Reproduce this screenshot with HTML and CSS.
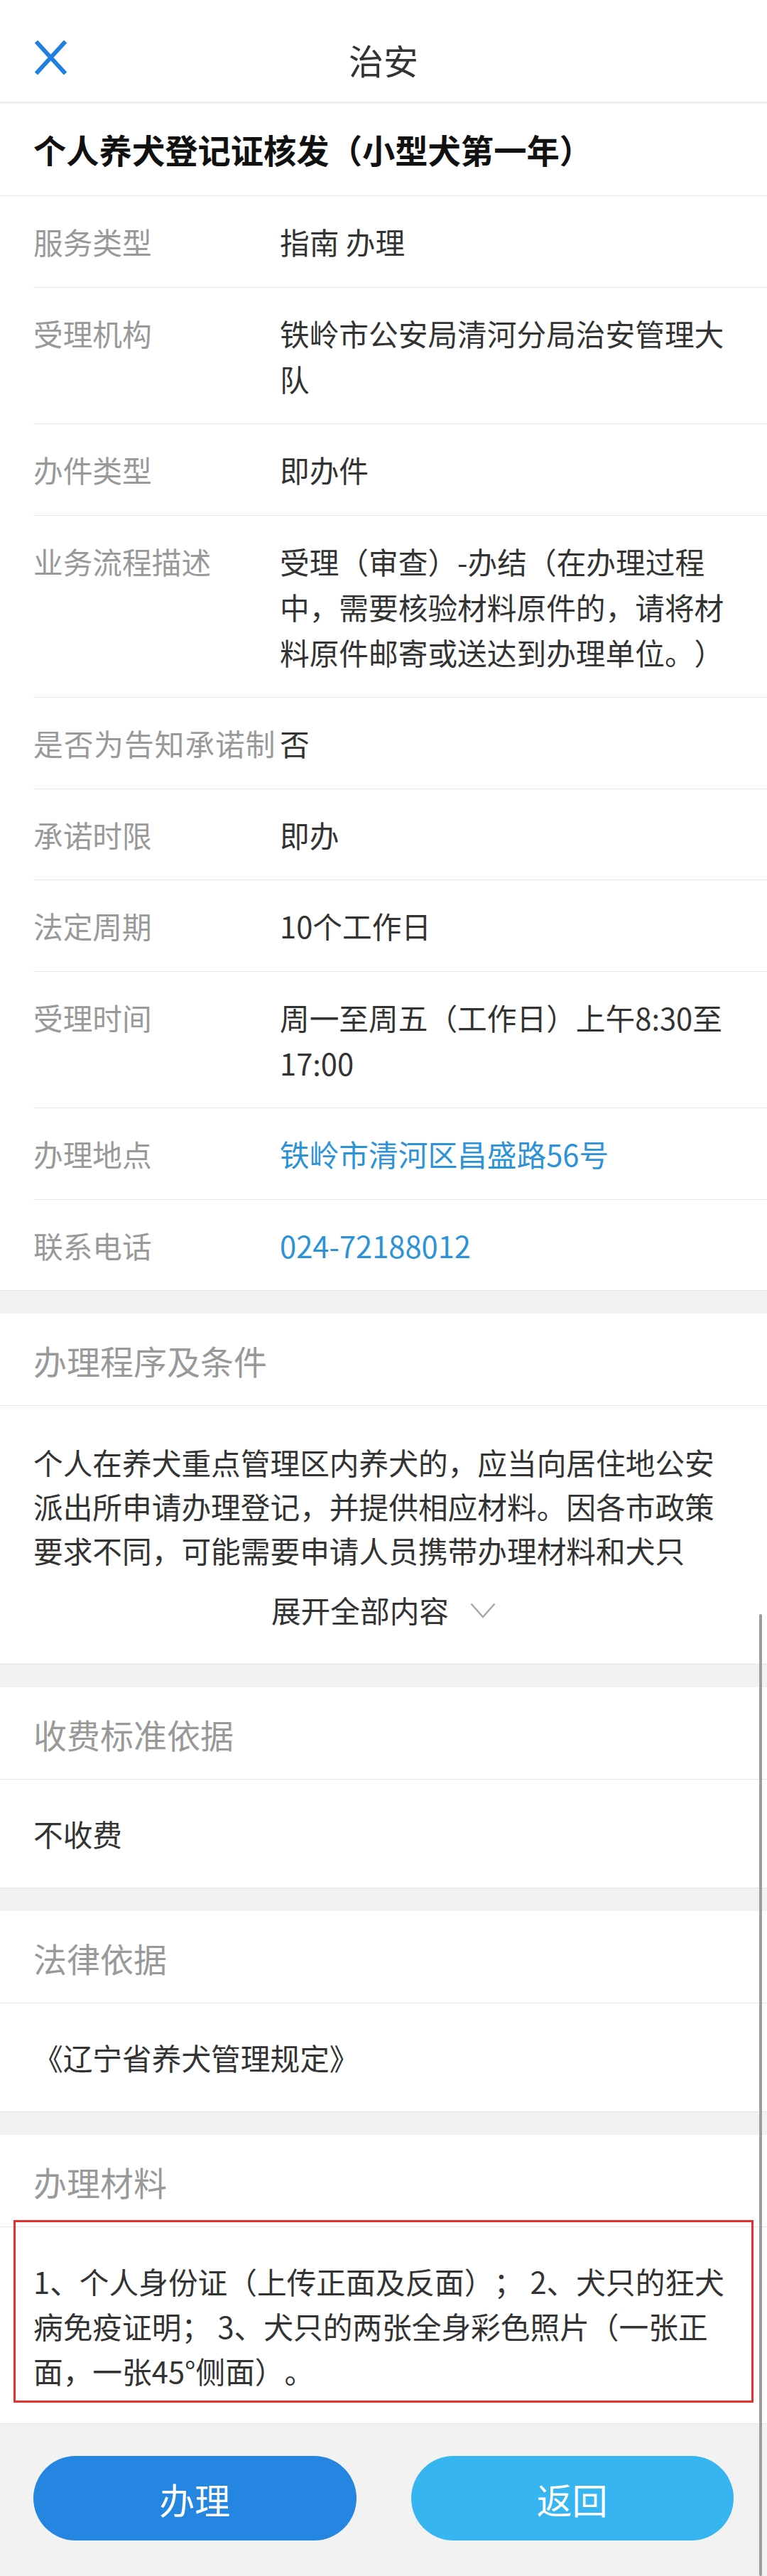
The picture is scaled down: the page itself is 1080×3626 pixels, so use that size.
FILE: index.html
```html
<!DOCTYPE html>
<html lang="zh-CN">
<head>
<meta charset="utf-8">
<title>治安</title>
<link rel="stylesheet" href="styles.css">
</head>
<body>
<div class="page">
  <header class="topbar">
    <div class="topbar-side">
      <svg class="close-icon" viewBox="0 0 48 48" aria-hidden="true"><path d="M3 1 L45 47 M45 1 L3 47"/></svg>
    </div>
    <div class="topbar-title">治安</div>
    <div class="topbar-side"></div>
  </header>

  <div class="title-block">个人养犬登记证核发（小型犬第一年）</div>

  <div class="info-list">
    <div class="row"><div class="label">服务类型</div><div class="value">指南 办理</div></div>
    <div class="row"><div class="label">受理机构</div><div class="value">铁岭市公安局清河分局治安管理大队</div></div>
    <div class="row"><div class="label">办件类型</div><div class="value">即办件</div></div>
    <div class="row"><div class="label">业务流程描述</div><div class="value">受理（审查）-办结（在办理过程中，需要核验材料原件的，请将材料原件邮寄或送达到办理单位。）</div></div>
    <div class="row"><div class="label label-wide">是否为告知承诺制</div><div class="value">否</div></div>
    <div class="row"><div class="label">承诺时限</div><div class="value">即办</div></div>
    <div class="row"><div class="label">法定周期</div><div class="value">10个工作日</div></div>
    <div class="row"><div class="label">受理时间</div><div class="value">周一至周五（工作日）上午8:30至17:00</div></div>
    <div class="row"><div class="label">办理地点</div><div class="value value-link">铁岭市清河区昌盛路56号</div></div>
    <div class="row"><div class="label">联系电话</div><div class="value value-link">024-72188012</div></div>
  </div>

  <section class="panel">
    <div class="panel-head">办理程序及条件</div>
    <div class="panel-body panel-body-long">
      <p class="panel-text">个人在养犬重点管理区内养犬的，应当向居住地公安派出所申请办理登记，并提供相应材料。因各市政策要求不同，可能需要申请人员携带办理材料和犬只</p>
      <div class="expand">
        <span>展开全部内容</span>
        <svg class="expand-icon" viewBox="0 0 36 22" aria-hidden="true"><polyline points="1.5,1.5 18,20 34.5,1.5"/></svg>
      </div>
    </div>
  </section>

  <section class="panel">
    <div class="panel-head">收费标准依据</div>
    <div class="panel-body"><p class="panel-text">不收费</p></div>
  </section>

  <section class="panel">
    <div class="panel-head">法律依据</div>
    <div class="panel-body"><p class="panel-text">《辽宁省养犬管理规定》</p></div>
  </section>

  <section class="panel panel-last">
    <div class="panel-head">办理材料</div>
    <div class="panel-body panel-body-materials">
      <p class="panel-text text-materials">1、个人身份证（上传正面及反面）； 2、犬只的狂犬病免疫证明； 3、犬只的两张全身彩色照片（一张正面，一张45°侧面）。</p>
      <div class="highlight-box"></div>
    </div>
  </section>

  <div class="action-bar">
    <button class="btn btn-primary" type="button">办理</button>
    <button class="btn btn-secondary" type="button">返回</button>
  </div>

  <div class="scrollbar"></div>
</div>
</body>
</html>
```

FILE: styles.css
```css
* {
  box-sizing: border-box;
}

html, body {
  margin: 0;
  padding: 0;
}

body {
  font-family: "Noto Sans CJK SC", "Noto Sans", sans-serif;
  background: #f2f2f2;
  color: #333;
  text-spacing-trim: space-all;
}

.page {
  position: relative;
  width: 1080px;
  min-height: 3626px;
  background: #f2f2f2;
  overflow: hidden;
}

/* top bar */
.topbar {
  display: grid;
  grid-template-columns: 1fr auto 1fr;
  align-items: center;
  height: 146px;
  padding-top: 24px;
  background: #fff;
  border-bottom: 3px solid #ececec;
}

.topbar-side {
  display: flex;
  align-items: center;
  padding-left: 48px;
}

.close-icon {
  width: 47px;
  height: 48px;
  display: block;
  margin-top: -6px;
}

.close-icon path {
  fill: none;
  stroke: #1f80e2;
  stroke-width: 6;
}

.topbar-title {
  font-size: 49px;
  line-height: 64px;
  color: #333;
}

/* title */
.title-block {
  background: #fff;
  padding: 32px 47px 33px;
  font-size: 46.3px;
  line-height: 64px;
  font-weight: 700;
  color: #111;
  border-bottom: 1px solid #e6e6e6;
}

/* info list */
.info-list {
  background: #fff;
  border-bottom: 1px solid #e4e4e4;
}

.row {
  display: flex;
  margin-left: 47px;
  padding: 32px 56px 31.5px 0;
  border-bottom: 1px solid #e8e8e8;
  font-size: 41.7px;
  line-height: 64px;
}

.row:last-child {
  border-bottom: none;
}

.label {
  flex: none;
  width: 347px;
  color: #999;
  white-space: nowrap;
}

.label-wide {
  letter-spacing: 1px;
}

.value {
  flex: 1;
  min-width: 0;
  color: #333;
}

.value-link {
  color: #2d93d8;
}

/* panels */
.panel {
  margin-top: 32px;
  background: #fff;
  border-bottom: 1px solid #e4e4e4;
}

.panel-head {
  padding: 34px 47px 31px;
  font-size: 47px;
  line-height: 64px;
  color: #999;
  border-bottom: 1px solid #e6e6e6;
}

.panel-body {
  position: relative;
  padding: 44px 47px;
}

.panel-text {
  margin: 0;
  font-size: 41.7px;
  line-height: 64px;
  color: #333;
}

.panel-body-long {
  padding: 48px 47px 44px;
}

.panel-body-long .panel-text {
  line-height: 62px;
}

.expand {
  display: flex;
  justify-content: center;
  align-items: center;
  margin-top: 21px;
  font-size: 41.7px;
  line-height: 64px;
  color: #333;
}

.expand-icon {
  width: 36px;
  height: 22px;
  margin-left: 30px;
  margin-top: 2px;
}

.expand-icon polyline {
  fill: none;
  stroke: #a8a8a8;
  stroke-width: 2.5;
}

.panel-body-materials {
  padding: 45px 47px 42px;
}

.text-materials {
  line-height: 63px;
}

.highlight-box {
  position: absolute;
  top: -10px;
  left: 19px;
  right: 19px;
  bottom: 29px;
  border: 3px solid #e3302e;
  pointer-events: none;
}

/* action bar */
.action-bar {
  display: flex;
  gap: 77px;
  padding: 45px 47px 49px;
  background: #f2f2f2;
}

.btn {
  flex: 1;
  height: 119px;
  border: none;
  border-radius: 60px;
  font-family: inherit;
  font-size: 50px;
  color: #fff;
  padding: 0;
}

.btn-primary {
  background: #2486e0;
}

.btn-secondary {
  background: #36b5f1;
}

/* scrollbar overlay */
.scrollbar {
  position: absolute;
  right: 7px;
  top: 2272px;
  bottom: 0;
  width: 4px;
  border-radius: 2px;
  background: #9c9c9c;
}
```
